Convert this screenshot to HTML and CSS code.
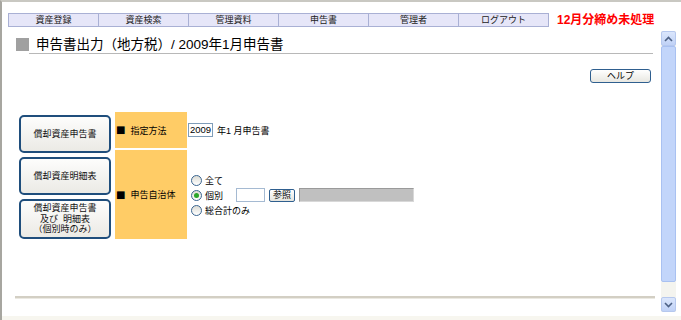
FILE: index.html
```html
<!DOCTYPE html>
<html lang="ja">
<head>
<meta charset="utf-8">
<title>申告書出力</title>
<link rel="stylesheet" href="styles.css">
</head>
<body>
<div class="window">
  <div class="frame">
    <div class="main">
      <div class="nav">
        <div class="tabs">
          <span class="tab">資産登録</span>
          <span class="tab">資産検索</span>
          <span class="tab">管理資料</span>
          <span class="tab">申告書</span>
          <span class="tab">管理者</span>
          <span class="tab">ログアウト</span>
        </div>
        <span class="alert">12月分締め未処理</span>
      </div>
      <div class="title-row">
        <span class="title-mark"></span>
        <h1 class="title">申告書出力（地方税）/ 2009年1月申告書</h1>
      </div>
      <div class="help-row">
        <button class="help-btn">ヘルプ</button>
      </div>
      <div class="content">
        <div class="side-buttons">
          <button class="side-btn b1">償却資産申告書</button>
          <button class="side-btn b2">償却資産明細表</button>
          <button class="side-btn b3"><span class="bl">償却資産申告書</span><span class="bl">及び&nbsp;&nbsp;明細表</span><span class="bl">（個別時のみ）</span></button>
        </div>
        <div class="form">
          <div class="form-row r1">
            <div class="label"><span class="sq">■</span>指定方法</div>
            <div class="value v1">
              <span class="year-input">2009</span>
              <span class="year-text">年1 月申告書</span>
            </div>
          </div>
          <div class="form-row r2">
            <div class="label"><span class="sq">■</span>申告自治体</div>
            <div class="value v2">
              <div class="radio-line"><span class="radio"></span><span>全て</span></div>
              <div class="radio-line"><span class="radio checked"></span><span class="kobetsu">個別</span><span class="code-input"></span><span class="ref-btn">参照</span><span class="name-box"></span></div>
              <div class="radio-line"><span class="radio"></span><span>総合計のみ</span></div>
            </div>
          </div>
        </div>
      </div>
      <div class="bottom-line"></div>
    </div>
    <div class="scrollbar">
      <div class="sb-arrow up"><svg width="9" height="6" viewBox="0 0 9 6"><path d="M1 5 L4.5 1.5 L8 5" fill="none" stroke="#4d6185" stroke-width="1.6"/></svg></div>
      <div class="sb-thumb"></div>
      <div class="sb-track"></div>
      <div class="sb-arrow down"><svg width="9" height="6" viewBox="0 0 9 6"><path d="M1 1 L4.5 4.5 L8 1" fill="none" stroke="#4d6185" stroke-width="1.6"/></svg></div>
    </div>
    <div class="gutter"></div>
  </div>
  <div class="status"></div>
</div>
</body>
</html>
```

FILE: styles.css
```css
* { box-sizing: border-box; }
html, body { margin: 0; padding: 0; background: #ffffff; }
body {
  width: 681px;
  height: 320px;
  overflow: hidden;
  font-family: "Liberation Sans", "Noto Sans CJK JP", sans-serif;
  font-size: 9px;
  color: #000;
}
.window { display: flex; flex-direction: column; width: 681px; height: 320px; }
.frame {
  display: flex;
  height: 316px;
  border-left: 2px solid #a7a6a0;
  border-top: 2px solid #c9c8c2;
}
.status { height: 4px; background: #f7f6ef; border-left: 2px solid #a7a6a0; }
.main {
  width: 659px;
  padding: 11px 0 0 6px;
  display: flex;
  flex-direction: column;
}
.nav { display: flex; align-items: center; height: 14px; }
.tabs {
  display: flex;
  height: 14px;
  border: 1px solid #a9b0d4;
  border-right: none;
  background: #e6e6f8;
  flex: none;
}
.tab {
  width: 90px;
  border-right: 1px solid #a9b0d4;
  text-align: center;
  font-size: 9px;
  line-height: 12px;
  color: #222;
}
.alert {
  margin-left: 8px;
  color: #ff0000;
  font-weight: bold;
  font-size: 12px;
  line-height: 14px;
  white-space: nowrap;
}
.title-row { display: flex; align-items: flex-start; margin-top: 11px; }
.title-mark {
  width: 13px; height: 13px;
  margin-left: 8px;
  background: #a0a0a0;
  flex: none;
}
.title {
  margin: 0;
  width: 624px;
  padding-left: 7px;
  font-size: 13.5px;
  font-weight: normal;
  line-height: 14px;
  height: 16px;
  border-bottom: 1px solid #b8b8b8;
}
.help-row { display: flex; justify-content: flex-end; padding-right: 10px; margin-top: 15px; }
.help-btn {
  width: 61px; height: 14px;
  padding: 0;
  border: 1px solid #2f5f8f;
  border-radius: 3px;
  background: linear-gradient(#ffffff, #e8e7e1);
  font-family: inherit;
  font-size: 9px;
  line-height: 12px;
  color: #000;
}
.content { display: flex; margin-top: 29px; margin-left: 11px; }
.side-buttons { display: flex; flex-direction: column; gap: 4px; padding-top: 3px; width: 92px; }
.side-btn {
  width: 92px;
  padding: 0;
  border: 2px solid #1f4e7c;
  border-radius: 5px;
  background: linear-gradient(#fdfdfc, #ebeae5);
  font-family: inherit;
  font-size: 9px;
  line-height: 12px;
  color: #111;
}
.b1 { height: 38px; }
.b2 { height: 38px; }
.b3 { height: 40px; display: flex; flex-direction: column; align-items: center; justify-content: center; }
.bl { display: block; line-height: 10.5px; white-space: nowrap; }
.form { display: flex; flex-direction: column; gap: 2px; margin-left: 4px; }
.form-row { display: flex; }
.r1 { height: 36px; }
.r2 { height: 89px; }
.label {
  width: 72px;
  background: #ffcc66;
  display: flex;
  align-items: center;
  padding-left: 1px;
  font-size: 9px;
}
.sq {
  font-family: "DejaVu Sans", sans-serif;
  font-size: 10px;
  line-height: 10px;
  margin-right: 5px;
}
.value { display: flex; }
.v1 { align-items: center; padding-left: 1px; }
.year-input {
  width: 25px; height: 14px;
  border: 1px solid #7f9db9;
  font-size: 9.5px;
  line-height: 12px;
  padding-left: 1px;
  white-space: nowrap;
}
.year-text { margin-left: 4px; font-size: 9px; }
.v2 { flex-direction: column; justify-content: center; padding-left: 4px; padding-top: 1px; }
.radio-line { display: flex; align-items: center; height: 15px; font-size: 9px; }
.radio {
  width: 11px; height: 11px;
  border: 1px solid #3a6590;
  border-radius: 50%;
  background: linear-gradient(#dcdcd5, #ffffff);
  margin-right: 3px;
  position: relative;
}
.radio.checked::after {
  content: "";
  position: absolute;
  left: 2px; top: 2px;
  width: 5px; height: 5px;
  border-radius: 50%;
  background: #2aa62a;
}
.kobetsu { width: 31px; }
.code-input {
  width: 29px; height: 14px;
  border: 1px solid #a5bad2;
  background: #fff;
}
.ref-btn {
  margin-left: 4px;
  width: 26px; height: 13px;
  border: 1px solid #2f5f8f;
  border-radius: 2px;
  background: linear-gradient(#ffffff, #e4e3dd);
  font-size: 9px;
  line-height: 11px;
  text-align: center;
}
.name-box {
  margin-left: 4px;
  width: 115px; height: 14px;
  background: #c0c0c0;
  border: 1px solid #9a9a9a;
  border-right-color: #d8d8d8;
  border-bottom-color: #d8d8d8;
}
.bottom-line {
  margin-top: 57px;
  margin-left: 7px;
  width: 640px;
  background: #d3cfc4;
  border-bottom: 1px solid #ebe9e2;
  height: 3px;
}
.scrollbar {
  width: 15px;
  margin-top: 29px;
  height: 281px;
  display: flex;
  flex-direction: column;
  background: #f4f4ef;
}
.sb-arrow {
  height: 15px;
  background: linear-gradient(#dbe6fc, #c0d2f6);
  border: 1px solid #b6c8ee;
  border-radius: 2px;
  display: flex;
  align-items: center;
  justify-content: center;
}
.sb-thumb {
  height: 236px;
  background: #c2d5fa;
  border: 1px solid #a9c1f1;
  border-radius: 2px;
}
.sb-track { flex: 1; }
.gutter { flex: 1; }
```
